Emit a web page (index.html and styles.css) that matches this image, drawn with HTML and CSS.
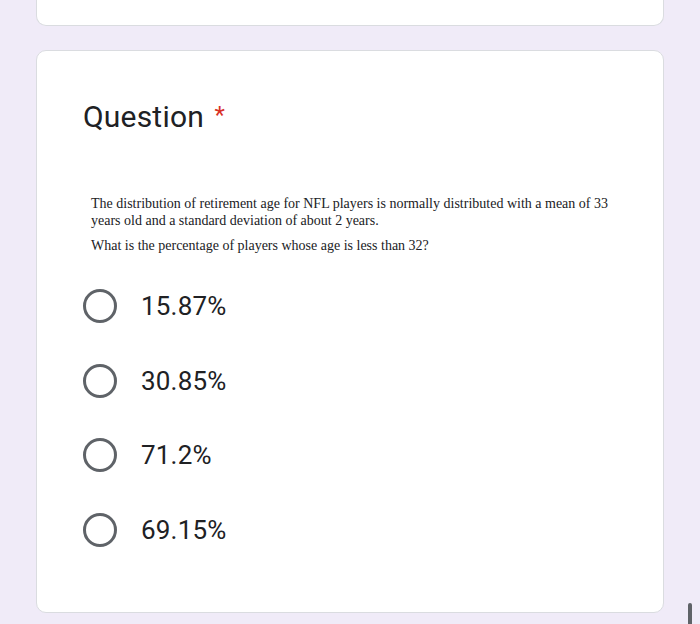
FILE: index.html
```html
<!DOCTYPE html>
<html>
<head>
<meta charset="utf-8">
<link rel="stylesheet" href="styles.css">
</head>
<body>
<div class="page">
  <div class="card card-top"></div>
  <div class="card card-main">
    <div class="title">Question <span class="req">*</span></div>
    <div class="desc">
      <p>The distribution of retirement age for NFL players is normally distributed with a mean of 33 years old and a standard deviation of about 2 years.</p>
      <p>What is the percentage of players whose age is less than 32?</p>
    </div>
    <div class="options">
      <div class="opt"><span class="radio"></span><span class="label">15.87%</span></div>
      <div class="opt"><span class="radio"></span><span class="label">30.85%</span></div>
      <div class="opt"><span class="radio"></span><span class="label">71.2%</span></div>
      <div class="opt"><span class="radio"></span><span class="label">69.15%</span></div>
    </div>
  </div>
</div>
<div class="scrollbar"></div>
</body>
</html>
```
FILE: styles.css
```css
html, body {
  margin: 0;
  padding: 0;
  background: #f0ebf8;
  height: 100%;
  overflow: hidden;
}
.page {
  padding-left: 36px;
  width: 628px;
  display: flex;
  flex-direction: column;
  gap: 24px;
}
.card {
  background: #fff;
  border: 1px solid #dadce0;
  border-radius: 10px;
  box-sizing: border-box;
  width: 628px;
}
.card-top {
  height: 26px;
  border-top: none;
  border-radius: 0 0 10px 10px;
}
.card-main {
  height: 563px;
  padding: 48px 0 0 46px;
}
.title {
  font-family: Roboto, "Liberation Sans", sans-serif;
  font-size: 30px;
  line-height: 36px;
  height: 36px;
  color: #202124;
  letter-spacing: 0.2px;
}
.req {
  color: #d93025;
  font-size: 24px;
  line-height: 0;
  vertical-align: 4px;
  margin-left: 3px;
}
.desc {
  margin-top: 60px;
  padding-left: 8px;
  font-family: "Liberation Serif", "Times New Roman", serif;
  font-size: 14px;
  line-height: 17px;
  color: #202124;
  width: 530px;
}
.desc p {
  margin: 0 0 8px 0;
}
.options {
  margin-top: 15px;
  display: flex;
  flex-direction: column;
}
.opt {
  height: 74.5px;
  display: flex;
  align-items: center;
  gap: 24px;
}
.radio {
  width: 34px;
  height: 34px;
  box-sizing: border-box;
  border: 3.5px solid #5f6368;
  border-radius: 50%;
}
.label {
  font-family: Roboto, "Liberation Sans", sans-serif;
  font-size: 26px;
  color: #202124;
  letter-spacing: 0.2px;
}
.scrollbar {
  position: absolute;
  left: 688px;
  top: 603px;
  width: 4px;
  height: 30px;
  border-radius: 2px;
  background: #5f6368;
}
```
